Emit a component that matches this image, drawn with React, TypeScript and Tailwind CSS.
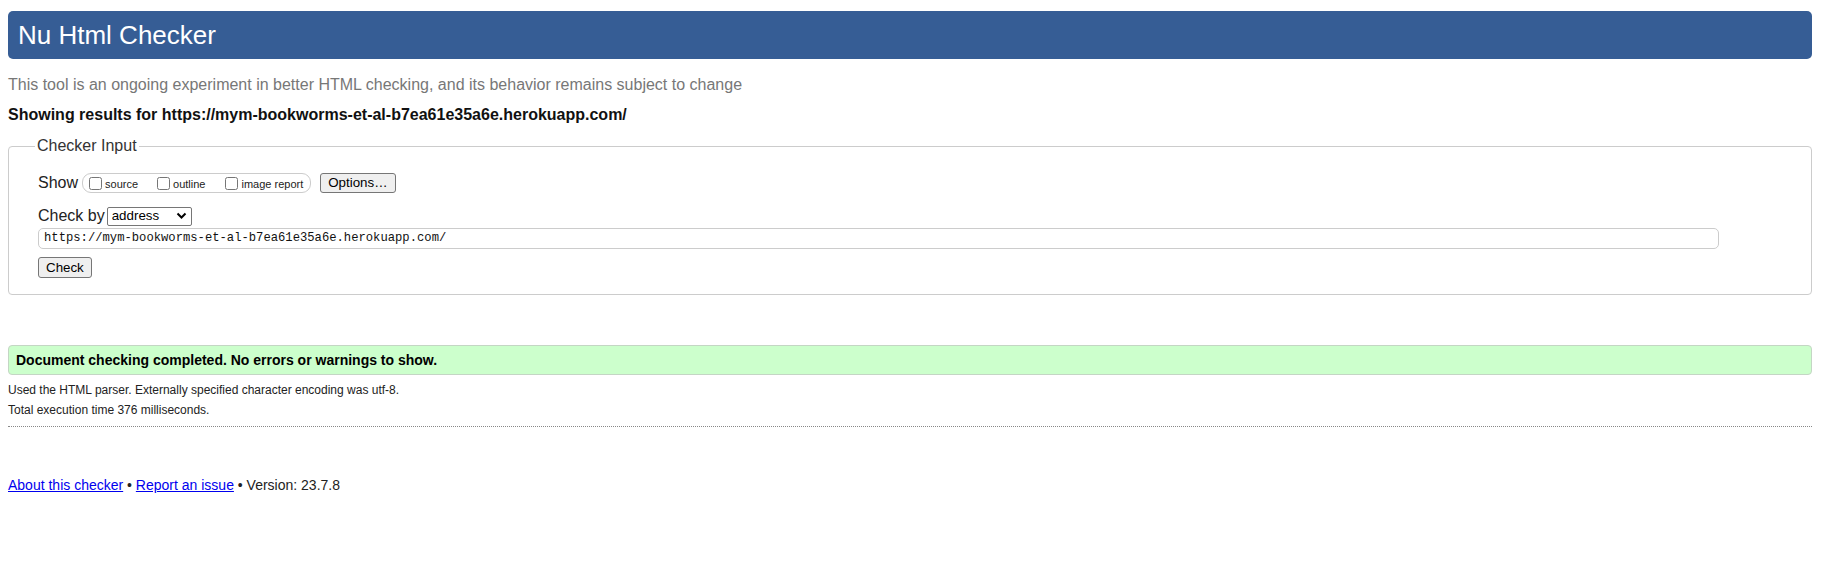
const checks = [
  { id: 'source', label: 'source', gap: 'mr-[19px]' },
  { id: 'outline', label: 'outline', gap: 'mr-[20px]' },
  { id: 'image', label: 'image report', gap: 'mr-[3px]' }
];

const Chevron = () => (
  <svg width="11" height="8" viewBox="0 0 11 8" className="ml-auto">
    <path d="M1.5 1.5 L5.5 5.5 L9.5 1.5" fill="none" stroke="#000" strokeWidth="2" />
  </svg>
);

export default function App() {
  return (
    <div className="min-h-[579px] bg-white font-['Liberation_Sans',Arial,sans-serif] text-[#111]">
      <div className="pt-[11px] pl-[8px] pr-[13px]">
        <h1 className="flex h-[48px] items-center rounded-[5px] bg-[#365d95] pl-[10px] text-[26px] leading-[30px] text-white">
          Nu Html Checker
        </h1>

        <p className="mt-[17px] h-[18px] text-[16px] leading-[18px] text-[#777]">
          This tool is an ongoing experiment in better HTML checking, and its behavior remains subject to change
        </p>
        <p className="mt-[12px] h-[18px] text-[16px] font-bold leading-[18px] text-[#111]">
          Showing results for https://mym-bookworms-et-al-b7ea61e35a6e.herokuapp.com/
        </p>

        <fieldset className="mt-[13px] rounded-[4px] border border-[#ccc] pb-[16px] pl-[26px] pr-[30px]">
          <legend className="px-[2px] text-[16px] leading-[18px] text-[#333]">Checker Input</legend>

          <div className="mt-[18px] flex h-[20px] items-center pl-[3px]">
            <span className="text-[16px] leading-[18px] text-[#222]">Show</span>
            <div className="ml-[4px] flex h-[20px] items-center rounded-[9px] border border-[#ccc] pl-[6px] pr-[4px]">
              {checks.map((c) => (
                <label key={c.id} className={`flex items-center ${c.gap}`}>
                  <input type="checkbox" className="m-0 h-[13px] w-[13px]" />
                  <span className="ml-[3px] mt-[2px] text-[11px] leading-[13px] text-[#222]">{c.label}</span>
                </label>
              ))}
            </div>
            <button className="ml-[9px] h-[20px] rounded-[3px] border border-[#767676] bg-[#efefef] px-[7px] text-[13.33px] leading-[16px] text-black">
              Options…
            </button>
          </div>

          <div className="mt-[13px] flex h-[20px] items-center pl-[3px]">
            <span className="text-[16px] leading-[18px] text-[#222]">Check by</span>
            <div className="ml-[2px] flex h-[19px] w-[85px] items-center rounded-[2px] border border-[#767676] bg-white pl-[4px] pr-[4px] text-[13.33px] leading-[16px] text-black">
              <span>address</span>
              <Chevron />
            </div>
          </div>

          <div className="mt-[2px] ml-[3px] flex h-[21px] w-[1681px] items-center rounded-[5px] border border-[#ccc] pl-[5px] font-['Liberation_Mono',monospace] text-[12.2px] text-[#111]">
            https://mym-bookworms-et-al-b7ea61e35a6e.herokuapp.com/
          </div>

          <div className="mt-[8px] flex pl-[3px]">
            <button className="h-[21px] rounded-[3px] border border-[#767676] bg-[#efefef] px-[7px] text-[13.33px] leading-[16px] text-black">
              Check
            </button>
          </div>
        </fieldset>

        <div className="mt-[50px] flex h-[30px] items-center rounded-[4px] border border-[#c4d6c4] bg-[#ccffcc] pl-[7px] text-[14px] font-bold text-black">
          Document checking completed. No errors or warnings to show.
        </div>

        <p className="mt-[5px] text-[12px] leading-[20px] text-[#222]">
          Used the HTML parser. Externally specified character encoding was utf-8.
        </p>
        <p className="text-[12px] leading-[20px] text-[#222]">Total execution time 376 milliseconds.</p>
        <hr className="mt-[6px] border-t border-dotted border-[#888]" />

        <p className="mt-[49px] text-[14px] leading-[18px] text-[#222]">
          <a href="#" className="text-[#0000ee] underline">About this checker</a>
          {' • '}
          <a href="#" className="text-[#0000ee] underline">Report an issue</a>
          {' • Version: 23.7.8'}
        </p>
      </div>
    </div>
  );
}
